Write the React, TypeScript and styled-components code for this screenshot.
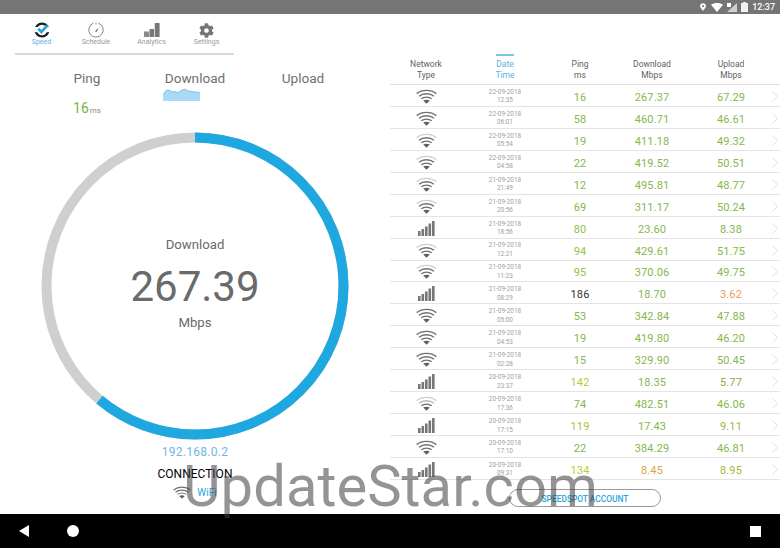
import React from 'react';
import styled, { createGlobalStyle } from 'styled-components';
import { FaCog } from 'react-icons/fa';

const GlobalStyle = createGlobalStyle`
  html, body {
    margin: 0;
    padding: 0;
    background: #fff;
    font-family: Roboto, "Liberation Sans", sans-serif;
  }
`;

const Screen = styled.div`
  position: relative;
  display: flex;
  flex-direction: column;
  width: 780px;
  height: 548px;
  overflow: hidden;
  background: #fff;
`;

const StatusBar = styled.div`
  display: flex;
  align-items: center;
  justify-content: flex-end;
  gap: 4px;
  height: 14px;
  padding-right: 5px;
  background: #757575;
  color: #fff;
  font-size: 9px;
  font-weight: 500;
`;

const PinSlot = styled.div`
  display: flex;
  margin-right: 1px;
`;

const Main = styled.div`
  flex: 1;
  display: flex;
  min-height: 0;
`;

const LeftPanel = styled.div`
  width: 390px;
  display: flex;
  flex-direction: column;
  align-items: center;
`;

const TabBar = styled.div`
  align-self: flex-start;
  display: grid;
  grid-template-columns: 53px 56px 55px 55px;
  width: 219px;
  height: 39px;
  margin-left: 15px;
  border-bottom: 2px solid #d8d8d8;
`;

const Tab = styled.div<{ $active?: boolean }>`
  display: flex;
  flex-direction: column;
  align-items: center;
  padding-top: 8px;
  color: ${(p) => (p.$active ? '#5ab0e0' : '#999')};
  font-size: 7px;
  line-height: 9px;
`;

const TabIcon = styled.div`
  height: 16px;
  display: flex;
  align-items: center;
  justify-content: center;
  color: #757575;
`;

const Metrics = styled.div`
  align-self: flex-start;
  display: grid;
  grid-template-columns: repeat(3, 108px);
  margin: 14px 0 0 33px;
  height: 63px;
`;

const Metric = styled.div`
  display: flex;
  flex-direction: column;
  align-items: center;
  color: #707070;
  font-size: 13.6px;
  line-height: 18px;
`;

const PingValue = styled.div`
  margin-top: 13px;
  color: #7cb342;
  font-size: 14px;
  line-height: 16px;
`;

const PingUnit = styled.span`
  margin-left: 1px;
  color: #888;
  font-size: 8px;
`;

const ChartSlot = styled.div`
  display: flex;
  margin: 1px 27px 0 0;
`;

const Gauge = styled.div`
  display: grid;
  width: 308px;
  height: 308px;
  & > * {
    grid-area: 1 / 1;
  }
`;

const GaugeText = styled.div`
  display: flex;
  flex-direction: column;
  align-items: center;
  justify-content: center;
  color: #6a6a6a;
  padding-bottom: 4px;
`;

const GaugeLabel = styled.div`
  font-size: 13.2px;
  line-height: 16px;
`;

const GaugeValue = styled.div`
  margin: 9px 0 3px;
  font-size: 42px;
  line-height: 50px;
`;

const IpText = styled.div`
  margin-top: 5px;
  color: #6fb8e2;
  font-size: 12px;
  line-height: 14px;
  letter-spacing: 0.3px;
`;

const ConnectionText = styled.div`
  margin-top: 8px;
  color: #000;
  font-size: 12px;
  line-height: 14px;
`;

const ConnectionType = styled.div`
  display: flex;
  align-items: center;
  gap: 6px;
  margin-top: 5px;
  color: #2ba6de;
  font-size: 10px;
`;

const RightPanel = styled.div`
  width: 390px;
  display: flex;
  flex-direction: column;
`;

const HeaderRow = styled.div`
  display: grid;
  grid-template-columns: 72px 86px 64px 80px 78px 10px;
  height: 71px;
  box-sizing: border-box;
  border-bottom: 1px solid #e0e0e0;
`;

const HeaderCell = styled.div<{ $active?: boolean }>`
  display: flex;
  flex-direction: column;
  align-items: center;
  justify-content: flex-end;
  padding-bottom: 3px;
  color: ${(p) => (p.$active ? '#5ab0e0' : '#5f5f5f')};
  font-size: 8.5px;
  line-height: 11px;
  text-align: center;
`;

const ActiveMark = styled.div`
  width: 18px;
  height: 2px;
  margin-bottom: 3px;
  background: #7cc3e8;
`;

const Row = styled.div`
  display: grid;
  grid-template-columns: 72px 86px 64px 80px 78px 10px;
  align-items: center;
  height: 21.94px;
  box-sizing: border-box;
  padding-top: 2px;
  border-bottom: 1px solid #e4e4e4;
`;

const IconCell = styled.div`
  display: flex;
  justify-content: center;
  align-items: center;
`;

const DateCell = styled.div`
  color: #a0a0a0;
  font-size: 6.4px;
  line-height: 8.6px;
  text-align: center;
`;

const Value = styled.div<{ $color: string }>`
  padding-top: 2px;
  color: ${(p) => p.$color};
  font-size: 11px;
  letter-spacing: 0.1px;
  text-align: center;
`;

const Footer = styled.div`
  display: flex;
  justify-content: center;
  padding-top: 9px;
`;

const AccountButton = styled.div`
  width: 152px;
  height: 18px;
  box-sizing: border-box;
  border: 1px solid #9a9a9a;
  border-radius: 9px;
  color: #2ba6de;
  font-size: 8.4px;
  font-weight: 500;
  line-height: 18px;
  text-align: center;
`;

const NavBar = styled.div`
  display: flex;
  align-items: center;
  height: 34px;
  padding: 0 19px;
  background: #000;
`;

const NavSpacer = styled.div`
  flex: 1;
`;

const HomeDot = styled.div`
  width: 12px;
  height: 12px;
  margin-left: 38px;
  border-radius: 50%;
  background: #fff;
`;

const RecentSquare = styled.div`
  width: 11px;
  height: 11px;
  background: #fff;
`;

const Watermark = styled.div`
  position: absolute;
  left: 183px;
  top: 448px;
  color: rgba(60, 60, 60, 0.55);
  font-family: Roboto, sans-serif;
  font-size: 58px;
  line-height: 76px;
  white-space: nowrap;
  pointer-events: none;
`;

const WifiIcon = ({ level = 3, size = 21 }: { level?: number; size?: number }) => {
  const outer = level >= 3 ? '#6e6e6e' : '#cfcfcf';
  const mid = level >= 2 ? '#6e6e6e' : '#b5b5b5';
  return (
    <svg width={size} height={(size * 15) / 21} viewBox="0 0 21 15" fill="none">
      <path d="M0.7 4.6C6 0.3 15 0.3 20.3 4.6" stroke={outer} strokeWidth="1.4" />
      <path d="M3 7.2C7 4 14 4 18 7.2" stroke={mid} strokeWidth="1.4" />
      <path d="M5.3 9.8C8.2 7.6 12.8 7.6 15.7 9.8" stroke="#6e6e6e" strokeWidth="1.4" />
      <path d="M7.2 11.6C9.2 10.6 11.8 10.6 13.8 11.6L10.5 14.8Z" fill="#5f5f5f" />
    </svg>
  );
};

const SignalIcon = () => (
  <svg width="17" height="15" viewBox="0 0 17 15" fill="#777">
    <rect x="0" y="10" width="2.6" height="5" />
    <rect x="3.5" y="8" width="2.6" height="7" />
    <rect x="7" y="5.5" width="2.6" height="9.5" />
    <rect x="10.5" y="2.5" width="2.6" height="12.5" />
    <rect x="14" y="0" width="2.6" height="15" />
  </svg>
);

const Chevron = () => (
  <svg width="6" height="11" viewBox="0 0 6 11" fill="none">
    <path d="M0.5 0.5L5.5 5.5L0.5 10.5" stroke="#dcdcdc" strokeWidth="0.9" />
  </svg>
);

const SpeedIcon = () => (
  <svg width="16" height="16" viewBox="0 0 16 16">
    <circle cx="8" cy="8" r="7.6" fill="#1d1d1f" />
    <path d="M0 5H16V10.2H0Z" fill="#fff" />
    <circle cx="8" cy="8" r="5.2" fill="#fff" />
    <path d="M4.4 6.8L7.4 10L13.4 3.4" fill="none" stroke="#2ba6de" strokeWidth="2.8" />
  </svg>
);

const ScheduleIcon = () => (
  <svg width="16" height="16" viewBox="0 0 16 16" fill="none">
    <path d="M5.6 1.1A7.2 7.2 0 1 0 10.4 1.1" stroke="#777" strokeWidth="0.9" />
    <path d="M8 0.8V2.6" stroke="#777" strokeWidth="0.9" />
    <path d="M7 9.2L10.8 5.6L8.6 10Z" fill="#666" />
  </svg>
);

const AnalyticsIcon = () => (
  <svg width="16" height="14" viewBox="0 0 16 14" fill="#777">
    <rect x="0" y="8.5" width="5" height="5.5" fill="#8a8a8a" />
    <rect x="5.5" y="6" width="4.6" height="8" />
    <rect x="10.8" y="0" width="4.8" height="14" />
  </svg>
);

const DownloadChart = () => (
  <svg width="37" height="13" viewBox="0 0 37 13">
    <path
      d="M0 13V7L3 2.5L6 2L9 4L12 3.5L15 4.5L18 2.5L22 1L25 3L29 3.5L32 4L37 4.5V13Z"
      fill="#a9d9f4"
    />
    <path
      d="M0 7L3 2.5L6 2L9 4L12 3.5L15 4.5L18 2.5L22 1L25 3L29 3.5L32 4L37 4.5"
      fill="none"
      stroke="#6fb8e2"
      strokeWidth="0.8"
    />
  </svg>
);

const GREEN = '#84b84c';
const LIME = '#94c245';

type Result = {
  net: 'wifi' | 'cell';
  level?: number;
  date: string;
  time: string;
  ping: [string, string];
  down: [string, string];
  up: [string, string];
};

const results: Result[] = [
  { net: 'wifi', level: 3, date: '22-09-2018', time: '12:35', ping: ['16', GREEN], down: ['267.37', GREEN], up: ['67.29', GREEN] },
  { net: 'wifi', level: 3, date: '22-09-2018', time: '06:01', ping: ['58', GREEN], down: ['460.71', GREEN], up: ['46.61', GREEN] },
  { net: 'wifi', level: 2, date: '22-09-2018', time: '05:54', ping: ['19', GREEN], down: ['411.18', GREEN], up: ['49.32', GREEN] },
  { net: 'wifi', level: 2, date: '22-09-2018', time: '04:58', ping: ['22', GREEN], down: ['419.52', GREEN], up: ['50.51', GREEN] },
  { net: 'wifi', level: 2, date: '21-09-2018', time: '21:49', ping: ['12', GREEN], down: ['495.81', GREEN], up: ['48.77', GREEN] },
  { net: 'wifi', level: 2, date: '21-09-2018', time: '20:56', ping: ['69', GREEN], down: ['311.17', GREEN], up: ['50.24', GREEN] },
  { net: 'cell', date: '21-09-2018', time: '18:56', ping: ['80', LIME], down: ['23.60', GREEN], up: ['8.38', GREEN] },
  { net: 'wifi', level: 2, date: '21-09-2018', time: '12:21', ping: ['94', LIME], down: ['429.61', GREEN], up: ['51.75', GREEN] },
  { net: 'wifi', level: 2, date: '21-09-2018', time: '11:23', ping: ['95', LIME], down: ['370.06', GREEN], up: ['49.75', GREEN] },
  { net: 'cell', date: '21-09-2018', time: '08:29', ping: ['186', '#333'], down: ['18.70', GREEN], up: ['3.62', '#ee9a5a'] },
  { net: 'wifi', level: 3, date: '21-09-2018', time: '05:00', ping: ['53', GREEN], down: ['342.84', GREEN], up: ['47.88', GREEN] },
  { net: 'wifi', level: 3, date: '21-09-2018', time: '04:53', ping: ['19', GREEN], down: ['419.80', GREEN], up: ['46.20', GREEN] },
  { net: 'wifi', level: 3, date: '21-09-2018', time: '02:28', ping: ['15', GREEN], down: ['329.90', GREEN], up: ['50.45', GREEN] },
  { net: 'cell', date: '20-09-2018', time: '23:37', ping: ['142', '#b0cb3c'], down: ['18.35', GREEN], up: ['5.77', '#8fa83c'] },
  { net: 'wifi', level: 1, date: '20-09-2018', time: '17:36', ping: ['74', GREEN], down: ['482.51', GREEN], up: ['46.06', GREEN] },
  { net: 'cell', date: '20-09-2018', time: '17:15', ping: ['119', '#a4c639'], down: ['17.43', GREEN], up: ['9.11', '#a0b84a'] },
  { net: 'wifi', level: 3, date: '20-09-2018', time: '17:10', ping: ['22', GREEN], down: ['384.29', GREEN], up: ['46.81', GREEN] },
  { net: 'cell', date: '20-09-2018', time: '09:31', ping: ['134', '#c0ca33'], down: ['8.45', '#d9a441'], up: ['8.95', '#a5b840'] },
];

const RING_RADIUS = 148.5;
const RING_LENGTH = 2 * Math.PI * RING_RADIUS;

export default function App() {
  return (
    <Screen>
      <GlobalStyle />
      <StatusBar>
        <PinSlot>
          <svg width="6" height="8" viewBox="0 0 7 9">
            <path d="M3.5 0A3.4 3.4 0 0 0 0.1 3.4C0.1 5.6 3.5 9 3.5 9S6.9 5.6 6.9 3.4A3.4 3.4 0 0 0 3.5 0ZM3.5 4.6A1.2 1.2 0 1 1 3.5 2.2A1.2 1.2 0 0 1 3.5 4.6Z" fill="#fff" />
          </svg>
        </PinSlot>
        <svg width="12" height="9" viewBox="0 0 12 9">
          <path d="M0 1.8C3.4-0.6 8.6-0.6 12 1.8L6 9Z" fill="#fff" />
        </svg>
        <svg width="10" height="9" viewBox="0 0 10 9">
          <path d="M10 0V9H0Z" fill="#cfcfcf" />
          <path d="M0 0H4V4H0Z" fill="#fff" />
        </svg>
        <svg width="7" height="10" viewBox="0 0 7 10">
          <path d="M2 0H5V1H7V10H0V1H2Z" fill="#f2f2f2" />
        </svg>
        <span>12:37</span>
      </StatusBar>
      <Main>
        <LeftPanel>
          <TabBar>
            <Tab $active>
              <TabIcon><SpeedIcon /></TabIcon>
              Speed
            </Tab>
            <Tab>
              <TabIcon><ScheduleIcon /></TabIcon>
              Schedule
            </Tab>
            <Tab>
              <TabIcon><AnalyticsIcon /></TabIcon>
              Analytics
            </Tab>
            <Tab>
              <TabIcon><FaCog size={15} /></TabIcon>
              Settings
            </Tab>
          </TabBar>
          <Metrics>
            <Metric>
              Ping
              <PingValue>16<PingUnit>ms</PingUnit></PingValue>
            </Metric>
            <Metric>
              Download
              <ChartSlot><DownloadChart /></ChartSlot>
            </Metric>
            <Metric>Upload</Metric>
          </Metrics>
          <Gauge>
            <svg width="308" height="308" viewBox="0 0 308 308" fill="none">
              <circle cx="154" cy="154" r={RING_RADIUS} stroke="#cfcfcf" strokeWidth="10" />
              <circle
                cx="154"
                cy="154"
                r={RING_RADIUS}
                stroke="#1fa8e0"
                strokeWidth="10"
                strokeDasharray={`${RING_LENGTH * 0.611} ${RING_LENGTH}`}
                transform="rotate(-90 154 154)"
              />
            </svg>
            <GaugeText>
              <GaugeLabel>Download</GaugeLabel>
              <GaugeValue>267.39</GaugeValue>
              <GaugeLabel>Mbps</GaugeLabel>
            </GaugeText>
          </Gauge>
          <IpText>192.168.0.2</IpText>
          <ConnectionText>CONNECTION</ConnectionText>
          <ConnectionType>
            <WifiIcon size={18} />
            WiFi
          </ConnectionType>
        </LeftPanel>
        <RightPanel>
          <HeaderRow>
            <HeaderCell>Network<br />Type</HeaderCell>
            <HeaderCell $active>
              <ActiveMark />
              Date<br />Time
            </HeaderCell>
            <HeaderCell>Ping<br />ms</HeaderCell>
            <HeaderCell>Download<br />Mbps</HeaderCell>
            <HeaderCell>Upload<br />Mbps</HeaderCell>
          </HeaderRow>
          {results.map((r) => (
            <Row key={r.date + r.time}>
              <IconCell>
                {r.net === 'wifi' ? <WifiIcon level={r.level} /> : <SignalIcon />}
              </IconCell>
              <DateCell>{r.date}<br />{r.time}</DateCell>
              <Value $color={r.ping[1]}>{r.ping[0]}</Value>
              <Value $color={r.down[1]}>{r.down[0]}</Value>
              <Value $color={r.up[1]}>{r.up[0]}</Value>
              <IconCell><Chevron /></IconCell>
            </Row>
          ))}
          <Footer>
            <AccountButton>SPEEDSPOT ACCOUNT</AccountButton>
          </Footer>
        </RightPanel>
      </Main>
      <NavBar>
        <svg width="10" height="12" viewBox="0 0 10 12">
          <path d="M10 0V12L0 6Z" fill="#fff" />
        </svg>
        <HomeDot />
        <NavSpacer />
        <RecentSquare />
      </NavBar>
      <Watermark>UpdateStar.com</Watermark>
    </Screen>
  );
}
